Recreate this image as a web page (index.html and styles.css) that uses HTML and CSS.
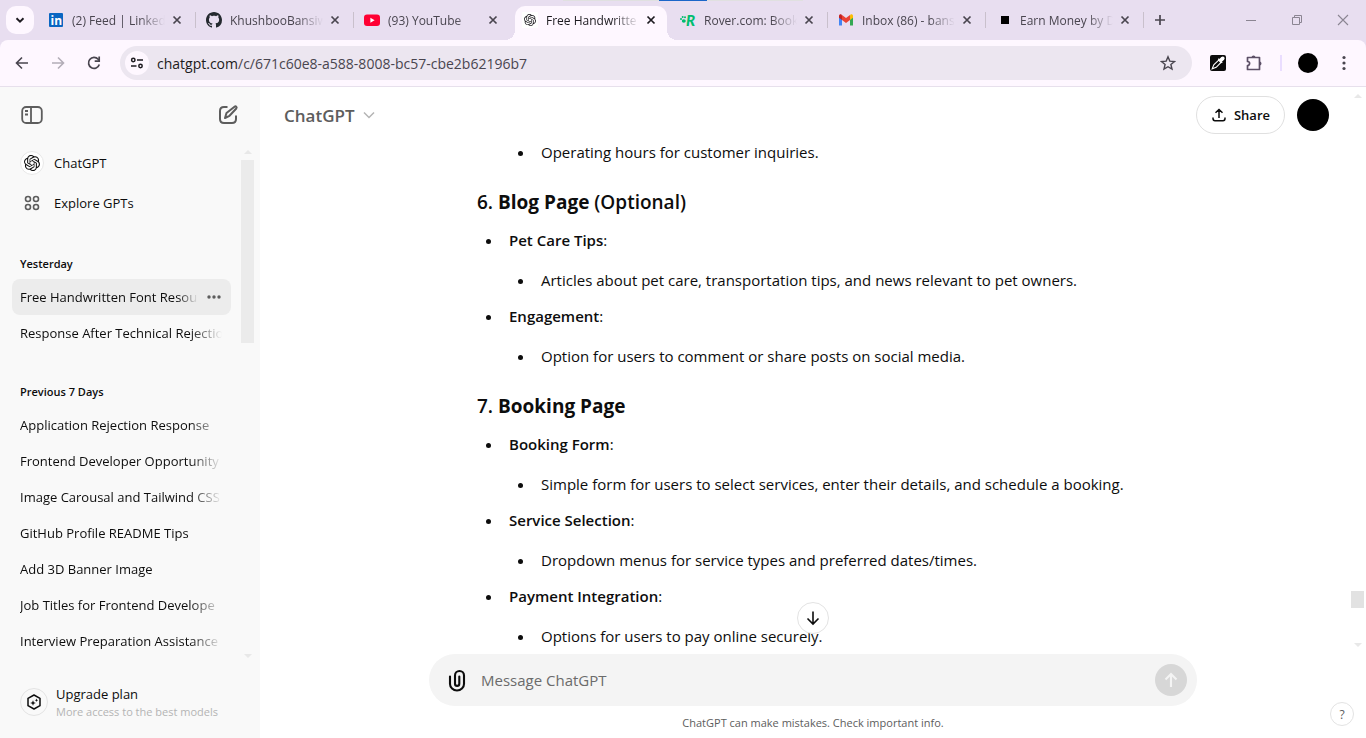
FILE: index.html
```html
<!DOCTYPE html>
<html lang="en">
<head>
<meta charset="utf-8">
<title>Free Handwritten Font Resources</title>
<link rel="stylesheet" href="styles.css">
</head>
<body>
<svg class="defs" aria-hidden="true">
  <symbol id="x" viewBox="0 0 16 16"><path d="M4.5 4.5l7 7M11.500 4.500l-7 7" fill="none" stroke="currentColor" stroke-width="1.7"/></symbol>
  <symbol id="openai" viewBox="0 0 24 24"><path fill="currentColor" d="M22.2819 9.8211a5.9847 5.9847 0 0 0-.5157-4.9108 6.0462 6.0462 0 0 0-6.5098-2.9A6.0651 6.0651 0 0 0 4.9807 4.1818a5.9847 5.9847 0 0 0-3.9977 2.9 6.0462 6.0462 0 0 0 .7427 7.0966 5.98 5.98 0 0 0 .511 4.9107 6.051 6.051 0 0 0 6.5146 2.9001A5.9847 5.9847 0 0 0 13.2599 24a6.0557 6.0557 0 0 0 5.7718-4.2058 5.9894 5.9894 0 0 0 3.9977-2.9001 6.0557 6.0557 0 0 0-.7475-7.0729zm-9.022 12.6081a4.4755 4.4755 0 0 1-2.8764-1.0408l.1419-.0804 4.7783-2.7582a.7948.7948 0 0 0 .3927-.6813v-6.7369l2.02 1.1686a.071.071 0 0 1 .038.052v5.5826a4.504 4.504 0 0 1-4.4945 4.4944zm-9.6607-4.1254a4.4708 4.4708 0 0 1-.5346-3.0137l.142.0852 4.783 2.7582a.7712.7712 0 0 0 .7806 0l5.8428-3.3685v2.3324a.0804.0804 0 0 1-.0332.0615L9.74 19.9502a4.4992 4.4992 0 0 1-6.1408-1.6464zM2.3408 7.8956a4.485 4.485 0 0 1 2.3655-1.9728V11.6a.7664.7664 0 0 0 .3879.6765l5.8144 3.3543-2.0201 1.1685a.0757.0757 0 0 1-.071 0l-4.8303-2.7865A4.504 4.504 0 0 1 2.3408 7.872zm16.5963 3.8558L13.1038 8.364 15.1192 7.2a.0757.0757 0 0 1 .071 0l4.8303 2.7913a4.4944 4.4944 0 0 1-.6765 8.1042v-5.6772a.79.79 0 0 0-.407-.667zm2.0107-3.0231l-.142-.0852-4.7735-2.7818a.7759.7759 0 0 0-.7854 0L9.409 9.2297V6.8974a.0662.0662 0 0 1 .0284-.0615l4.8303-2.7866a4.4992 4.4992 0 0 1 6.6802 4.66zM8.3065 12.863l-2.02-1.1638a.0804.0804 0 0 1-.038-.0567V6.0742a4.4992 4.4992 0 0 1 7.3757-3.4537l-.142.0805L8.704 5.459a.7948.7948 0 0 0-.3927.6813zm1.0976-2.3654l2.602-1.4998 2.6069 1.4998v2.9994l-2.5974 1.4997-2.6067-1.4997Z"/></symbol>
</svg>

<header class="browser">
  <div class="loading"></div>
  <div class="tabstrip">
    <button class="tab-search" aria-label="Search tabs"><svg width="12" height="12" viewBox="0 0 12 12"><path d="M2.500 4.300L6 7.700l3.500-3.400" fill="none" stroke="#1d1b20" stroke-width="1.900"/></svg></button>
    <div class="tabs">
      <div class="tab">
        <svg class="fav" viewBox="0 0 16 16"><rect x="1" y="1" width="14" height="14" rx="1" fill="#0a66c2"/><text x="2.500" y="12.600" font-family="Open Sans, sans-serif" font-size="12" font-weight="700" fill="#fff">in</text></svg>
        <span class="tab-title">(2) Feed | Linked</span>
        <button class="close" aria-label="Close tab"><svg viewBox="0 0 16 16"><use href="#x"/></svg></button>
      </div>
      <div class="tab">
        <svg class="fav" viewBox="0 0 16 16"><path fill="#24292f" d="M8 0C3.580 0 0 3.580 0 8c0 3.540 2.290 6.530 5.470 7.590.4.070.55-.17.55-.38 0-.19-.01-.82-.01-1.490-2.010.37-2.530-.49-2.690-.94-.09-.23-.48-.94-.82-1.130-.28-.15-.68-.52-.01-.53.63-.01 1.080.58 1.230.82.72 1.210 1.870.87 2.330.66.070-.52.28-.87.51-1.070-1.780-.2-3.640-.89-3.640-3.950 0-.87.31-1.590.82-2.150-.08-.2-.36-1.020.08-2.120 0 0 .67-.21 2.200.82.64-.18 1.320-.27 2-.27s1.360.09 2 .27c1.530-1.040 2.200-.82 2.200-.82.44 1.100.16 1.920.08 2.120.51.56.82 1.270.82 2.150 0 3.070-1.870 3.750-3.650 3.950.29.25.54.73.54 1.480 0 1.070-.01 1.930-.01 2.200 0 .21.15.46.55.38A8.010 8.010 0 0 0 16 8c0-4.420-3.580-8-8-8z"/></svg>
        <span class="tab-title">KhushbooBansiw</span>
        <button class="close" aria-label="Close tab"><svg viewBox="0 0 16 16"><use href="#x"/></svg></button>
      </div>
      <div class="tab before-active">
        <svg class="fav" viewBox="0 0 16 16"><rect y="2.500" width="16" height="11.500" rx="3" fill="#ff0033"/><path d="M6.400 5.700v5l4.200-2.500z" fill="#fff"/></svg>
        <span class="tab-title">(93) YouTube</span>
        <button class="close" aria-label="Close tab"><svg viewBox="0 0 16 16"><use href="#x"/></svg></button>
      </div>
      <div class="tab active">
        <span class="fav fav-gpt"><svg viewBox="0 0 24 24"><use href="#openai"/></svg></span>
        <span class="tab-title">Free Handwritte</span>
        <button class="close" aria-label="Close tab"><svg viewBox="0 0 16 16"><use href="#x"/></svg></button>
      </div>
      <div class="tab">
        <svg class="fav" viewBox="0 0 16 16"><g fill="#00bd70"><ellipse cx="3.800" cy="9" rx="2" ry="1.700"/><circle cx="1" cy="6.900" r="1"/><circle cx="2.700" cy="5.100" r="1"/><circle cx="5" cy="5.300" r="1"/></g><text x="6" y="13.500" font-family="Lato, sans-serif" font-style="italic" font-size="15" font-weight="900" fill="#00bd70">R</text></svg>
        <span class="tab-title">Rover.com: Book</span>
        <button class="close" aria-label="Close tab"><svg viewBox="0 0 16 16"><use href="#x"/></svg></button>
      </div>
      <div class="tab">
        <svg class="fav" viewBox="0 0 16 16"><path d="M1 4v9.500h3V7z" fill="#4285f4"/><path d="M12 7v6.500h3V4z" fill="#34a853"/><path d="M12 3.500V8l3-2.200V4c0-1.500-1.600-2.100-2.600-1.300z" fill="#fbbc04"/><path d="M4 3.500V8L1 5.800V4c0-1.500 1.600-2.100 2.600-1.300z" fill="#c5221f"/><path d="M4 3v5l4 3 4-3V3L8 6z" fill="#ea4335"/></svg>
        <span class="tab-title">Inbox (86) - bans</span>
        <button class="close" aria-label="Close tab"><svg viewBox="0 0 16 16"><use href="#x"/></svg></button>
      </div>
      <div class="tab">
        <svg class="fav" viewBox="0 0 16 16"><rect x="5" y="4" width="8" height="8"/></svg>
        <span class="tab-title">Earn Money by D</span>
        <button class="close" aria-label="Close tab"><svg viewBox="0 0 16 16"><use href="#x"/></svg></button>
      </div>
    </div>
    <button class="new-tab" aria-label="New tab"><svg width="12" height="12" viewBox="0 0 12 12"><path d="M6 1v10M1 6h10" stroke="#49454f" stroke-width="1.700"/></svg></button>
    <div class="window-controls">
      <button aria-label="Minimize"><svg width="12" height="12" viewBox="0 0 12 12"><path d="M1 6.500h10" stroke="#8b8592"/></svg></button>
      <button aria-label="Restore"><svg width="12" height="12" viewBox="0 0 12 12" fill="none" stroke="#8b8592"><path d="M1.500 3.500h7v7h-7zM3.500 3.500v-2h7v7h-2"/></svg></button>
      <button aria-label="Close"><svg width="12" height="12" viewBox="0 0 12 12"><path d="M1 1l10 10M11 1L1 11" stroke="#8b8592" stroke-width="1.100"/></svg></button>
    </div>
  </div>
  <div class="toolbar">
    <div class="nav-buttons">
      <button aria-label="Back"><svg width="16" height="16" viewBox="0 0 16 16"><path d="M14 8H3M8 2.500L2.500 8 8 13.500" fill="none" stroke="#49454f" stroke-width="1.600"/></svg></button>
      <button aria-label="Forward"><svg width="16" height="16" viewBox="0 0 16 16"><path d="M2 8h11M8 2.500L13.500 8 8 13.500" fill="none" stroke="#b3adb8" stroke-width="1.600"/></svg></button>
      <button aria-label="Reload"><svg width="16" height="16" viewBox="0 0 16 16"><path d="M13.300 9.500A5.500 5.500 0 1 1 12.200 4.300L13 5.200" fill="none" stroke="#49454f" stroke-width="1.700"/><path d="M13.200 1.500v4.700H8.700" fill="none" stroke="#49454f" stroke-width="1.700"/></svg></button>
    </div>
    <div class="omnibox">
      <button class="site-info" aria-label="Site information"><svg width="14" height="14" viewBox="0 0 14 14" fill="none" stroke="#1d1b20" stroke-width="1.500"><circle cx="3.300" cy="4" r="1.700"/><path d="M7 4h6M1 10h5.500"/><circle cx="10.500" cy="10" r="1.700"/></svg></button>
      <div class="url"><span class="host">chatgpt.com</span>/c/671c60e8-a588-8008-bc57-cbe2b62196b7</div>
      <button class="star" aria-label="Bookmark"><svg width="16" height="16" viewBox="0 0 16 16"><path d="M8 1.800l1.800 4.300 4.700.4-3.600 3 1.100 4.600L8 11.700 4 14.100l1.100-4.600-3.600-3 4.700-.4z" fill="none" stroke="#49454f" stroke-width="1.400"/></svg></button>
    </div>
    <div class="extensions">
      <button aria-label="Color picker"><svg width="16" height="16" viewBox="0 0 16 16"><rect width="16" height="16" rx="2" fill="#0c0c0c"/><path d="M8.700 5.200L3.800 9.800l-1.600 4 4-1.500 4.800-4.800z" fill="none" stroke="#fff" stroke-width="1.100"/><path d="M8.300 3.800l3.900 3.900M9.800 4.800l2-2.200c1.500-1 2.700.4 1.700 1.700l-2.100 2z" fill="#fff" stroke="#fff" stroke-width="1.500"/></svg></button>
      <button aria-label="Extensions"><svg width="18" height="18" viewBox="0 0 18 18"><path d="M2.500 3.500h12v12h-12v-4c2.800 0 2.800-4 0-4z" fill="none" stroke="#5d5067" stroke-width="1.700" stroke-linejoin="round"/><path d="M6.500 3.500a2 2 0 0 1 4 0M14.500 7.500a2 2 0 0 1 0 4" fill="#5d5067"/></svg></button>
      <span class="divider"></span>
      <button aria-label="Profile"><span class="profile"></span></button>
      <button aria-label="Menu"><svg width="16" height="16" viewBox="0 0 16 16" fill="#49454f"><circle cx="8" cy="2.500" r="1.600"/><circle cx="8" cy="8" r="1.600"/><circle cx="8" cy="13.500" r="1.600"/></svg></button>
    </div>
  </div>
</header>

<div class="app">
  <aside class="sidebar">
    <div class="side-top">
      <button aria-label="Close sidebar"><svg width="24" height="24" viewBox="0 0 24 24" fill="none" stroke="#5d5d5d" stroke-width="1.800"><rect x="2.200" y="4" width="19.600" height="16" rx="4"/><path d="M11 4v16M5 8h3M5 11.500h3"/></svg></button>
      <button aria-label="New chat"><svg width="24" height="24" viewBox="0 0 24 24" fill="none" stroke="#5d5d5d" stroke-width="2"><path d="M11.500 4H8C5 4 4 5 4 8v8c0 3 1 4 4 4h8c3 0 4-1 4-4v-3.500"/><path d="M18.500 3.700c1.300-1 2.800.5 1.800 1.800L13.500 12.800 9 15l1.500-5z" stroke-linejoin="round"/></svg></button>
    </div>
    <div class="side-scroll">
      <nav class="side-list">
        <a class="link" href="#"><span class="round"><svg width="16" height="16" viewBox="0 0 24 24"><use href="#openai"/></svg></span>ChatGPT</a>
        <a class="link" href="#"><span class="round plain"><svg width="16" height="16" viewBox="0 0 16 16" fill="none" stroke="#5d5d5d" stroke-width="1.600"><circle cx="4" cy="4" r="2.500"/><circle cx="12" cy="4" r="2.500"/><circle cx="4" cy="12" r="2.500"/><circle cx="12" cy="12" r="2.500"/></svg></span>Explore GPTs</a>
        <h2>Yesterday</h2>
        <div class="chat selected"><a href="#">Free Handwritten Font Resou</a><button aria-label="Options"><svg width="16" height="16" viewBox="0 0 16 16" fill="#5d5d5d"><circle cx="3" cy="8" r="1.700"/><circle cx="8" cy="8" r="1.700"/><circle cx="13" cy="8" r="1.700"/></svg></button></div>
        <div class="chat"><a href="#">Response After Technical Rejectio</a></div>
        <h2>Previous 7 Days</h2>
        <div class="chat"><a href="#">Application Rejection Response</a></div>
        <div class="chat"><a href="#">Frontend Developer Opportunity</a></div>
        <div class="chat"><a href="#">Image Carousal and Tailwind CSS</a></div>
        <div class="chat"><a href="#">GitHub Profile README Tips</a></div>
        <div class="chat"><a href="#">Add 3D Banner Image</a></div>
        <div class="chat"><a href="#">Job Titles for Frontend Develope</a></div>
        <div class="chat"><a href="#">Interview Preparation Assistance</a></div>
      </nav>
      <div class="scrollbar"><i class="up"></i><i class="thumb"></i><i class="down"></i></div>
    </div>
    <a class="upgrade" href="#">
      <span class="badge"><svg width="18" height="18" viewBox="0 0 18 18"><path d="M9 2l6 3.300v7.400L9 16l-6-3.300V5.300z" fill="none" stroke="#0d0d0d" stroke-width="1.500" stroke-linejoin="round"/><path d="M8 7.200l.8 2 2 .8-2 .8-.8 2-.8-2-2-.8 2-.8zM11.500 5.500l.5 1.200 1.200.5-1.200.5-.5 1.200-.5-1.200-1.200-.5 1.200-.5z" fill="#0d0d0d"/></svg></span>
      <span class="upgrade-text"><span>Upgrade plan</span><small>More access to the best models</small></span>
    </a>
  </aside>

  <main class="main">
    <div class="main-top">
      <button class="model">ChatGPT <svg width="12" height="12" viewBox="0 0 12 12"><path d="M1 3.500l5 5 5-5" fill="none" stroke="#b4b4b4" stroke-width="1.500"/></svg></button>
      <div class="top-actions">
        <button class="share"><svg width="14" height="14" viewBox="0 0 14 14" fill="none" stroke="#0d0d0d" stroke-width="1.500"><path d="M7 10V1.500M3.500 4.800L7 1.500l3.500 3.300M1 9.500v1c0 1.500.5 2.200 2 2.200h8c1.500 0 2-.7 2-2.200v-1"/></svg>Share</button>
        <button class="avatar" aria-label="Account"></button>
      </div>
    </div>
    <div class="thread">
      <article class="column">
        <ul><li><ul><li>Operating hours for customer inquiries.</li></ul></li></ul>
        <h3>6. <b>Blog Page</b> (Optional)</h3>
        <ul>
          <li><strong>Pet Care Tips</strong>:<ul><li>Articles about pet care, transportation tips, and news relevant to pet owners.</li></ul></li>
          <li><strong>Engagement</strong>:<ul><li>Option for users to comment or share posts on social media.</li></ul></li>
        </ul>
        <h3>7. <b>Booking Page</b></h3>
        <ul>
          <li><strong>Booking Form</strong>:<ul><li>Simple form for users to select services, enter their details, and schedule a booking.</li></ul></li>
          <li><strong>Service Selection</strong>:<ul><li>Dropdown menus for service types and preferred dates/times.</li></ul></li>
          <li><strong>Payment Integration</strong>:<ul><li>Options for users to pay online securely.</li></ul></li>
        </ul>
      </article>
      <button class="to-bottom" aria-label="Scroll to bottom"><svg width="16" height="16" viewBox="0 0 16 16"><path d="M8 1.500v12.500M2.500 8.500L8 14l5.500-5.500" fill="none" stroke="#0d0d0d" stroke-width="1.600"/></svg></button>
    </div>
    <div class="bottom">
      <form class="composer">
        <button type="button" class="attach" aria-label="Attach files"><svg width="24" height="24" viewBox="0 0 24 24"><path d="M5 8.500v7.500a7 6.500 0 0 0 14 0V7.500a4.500 4.500 0 0 0-9 0v8.200a2 2 0 0 0 4.300 0V8.500" fill="none" stroke="#0d0d0d" stroke-width="2.100" stroke-linecap="round"/></svg></button>
        <input type="text" placeholder="Message ChatGPT" aria-label="Message ChatGPT">
        <button type="button" class="send" aria-label="Send"><svg width="16" height="16" viewBox="0 0 16 16"><path d="M8 15V2M2.500 7.500L8 2l5.500 5.500" fill="none" stroke="#f4f4f4" stroke-width="2.100"/></svg></button>
      </form>
      <p>ChatGPT can make mistakes. Check important info.</p>
    </div>
    <div class="scrollbar main-scroll"><i class="up"></i><i class="thumb"></i><i class="down"></i></div>
    <button class="help" aria-label="Help">?</button>
  </main>
</div>
</body>
</html>
```
FILE: styles.css
```css
* { box-sizing: border-box; }
body {
  margin: 0;
  height: 100vh;
  display: flex;
  flex-direction: column;
  overflow: hidden;
  font-family: "Open Sans", "Noto Sans", sans-serif;
  font-size: 15px;
  color: #0d0d0d;
  background: #fff;
}
button {
  display: grid;
  place-items: center;
  padding: 0;
  border: 0;
  background: none;
  font: inherit;
  color: inherit;
}
a { color: inherit; text-decoration: none; }
.defs { position: absolute; width: 0; height: 0; }

/* Browser frame */
.browser { position: relative; background: #e8def0; font-size: 12px; border-bottom: 1px solid #e7e0ec; }
.loading {
  position: absolute;
  top: 0;
  left: 50%;
  width: 240px;
  height: 1px;
  margin-left: -120px;
  background: linear-gradient(90deg, #e0e0e0 40%, #1b66c9 40%, #1b66c9 60%, #e0e0e0 60%);
}
.tabstrip { display: flex; height: 40px; padding-left: 6px; }
.tab-search { flex: none; width: 28px; height: 28px; margin-top: 6px; border-radius: 10px; background: #fef7ff; }
.tabs { display: flex; flex: 0 1 1106px; min-width: 0; margin-left: 4px; }
.tab {
  position: relative;
  display: flex;
  flex: 1 1 0;
  align-items: center;
  min-width: 0;
  padding: 0 11px 0 10px;
  color: #49454f;
}
.tab::after { content: ""; position: absolute; right: 0; top: 12px; width: 1px; height: 16px; background: #c9c0cc; }
.tab.before-active::after { display: none; }
.fav { flex: none; width: 16px; height: 16px; }
.fav-gpt { display: grid; place-items: center; background: #fff; }
.fav-gpt svg { width: 12px; height: 12px; }
.tab-title {
  flex: 1;
  min-width: 0;
  margin: 0 4px 0 8px;
  overflow: hidden;
  white-space: nowrap;
  mask-image: linear-gradient(90deg, #000 calc(100% - 26px), transparent);
}
.close { flex: none; width: 16px; height: 16px; }
.close svg { width: 16px; height: 16px; }
.tab.active { z-index: 0; color: #1d1b20; }
.tab.active::before {
  content: "";
  position: absolute;
  inset: 6px 3px 0;
  z-index: -1;
  border-radius: 10px 10px 0 0;
  background: #fef7ff;
}
.tab.active::after {
  inset: auto -7px 0;
  z-index: -1;
  width: auto;
  height: 10px;
  background:
    radial-gradient(circle at 0 0, transparent 10px, #fef7ff 10px) left / 10px 10px no-repeat,
    radial-gradient(circle at 100% 0, transparent 10px, #fef7ff 10px) right / 10px 10px no-repeat;
}
.new-tab { width: 28px; height: 28px; margin: 6px 0 0 2px; }
.window-controls { display: flex; margin-left: auto; }
.window-controls button { width: 46px; height: 40px; }
.toolbar {
  display: flex;
  align-items: center;
  gap: 12px;
  height: 46px;
  padding: 0 8px;
  border-radius: 8px 8px 0 0;
  background: #fef7ff;
}
.nav-buttons, .extensions { display: flex; align-items: center; gap: 8px; }
.nav-buttons button, .extensions button { width: 28px; height: 28px; }
.omnibox {
  display: flex;
  flex: 1;
  align-items: center;
  height: 34px;
  padding: 0 12px 0 5px;
  border-radius: 17px;
  background: #ece6f0;
  font-size: 14px;
  color: #49454f;
}
.site-info { width: 24px; height: 24px; border-radius: 50%; background: #fef7ff; }
.url { flex: 1; margin-left: 8px; white-space: nowrap; }
.host { color: #1d1b20; }
.star { width: 24px; height: 24px; }
.divider { width: 2px; height: 16px; margin: 0 4px; background: #eaddff; }
.profile { width: 20px; height: 20px; border-radius: 50%; background: #000; }

/* Application */
.app { display: flex; flex: 1; min-height: 0; }
.sidebar { display: flex; flex-direction: column; flex: none; width: 260px; background: #f9f9f9; font-size: 13px; }
.side-top { display: flex; justify-content: space-between; padding: 8px 12px; }
.side-top button { width: 40px; height: 40px; }
.side-scroll { display: flex; flex: 1; min-height: 0; }
.side-list { flex: 1; min-width: 0; padding-left: 12px; overflow: hidden; }
.link { display: flex; align-items: center; gap: 10px; height: 40px; padding-left: 8px; }
.round {
  display: grid;
  place-items: center;
  width: 24px;
  height: 24px;
  border: 1px solid #e8e8e8;
  border-radius: 50%;
  background: #fff;
}
.round.plain { border: 0; background: none; }
.side-list h2 { margin: 32px 0 7px; padding-left: 8px; font-size: 11px; line-height: 17px; font-weight: 600; }
.chat { display: flex; align-items: center; height: 36px; padding: 0 9px 0 8px; border-radius: 8px; }
.chat a {
  flex: 1;
  min-width: 0;
  overflow: hidden;
  line-height: 20px;
  white-space: nowrap;
  mask-image: linear-gradient(90deg, #000 calc(100% - 32px), transparent);
}
.chat.selected { background: #ececec; }
.chat.selected a { mask-image: linear-gradient(90deg, #000 calc(100% - 20px), transparent); }
.chat.selected button { width: 16px; height: 16px; margin-left: 8px; }
.scrollbar { display: flex; flex-direction: column; align-items: center; width: 13px; margin: 7px 6px 4px 10px; }
.up, .down { border: 4px solid transparent; }
.up { border-top: 0; border-bottom-color: #e8e8e8; }
.down { margin-top: auto; border-bottom: 0; border-top-color: #e8e8e8; }
.thumb { width: 13px; height: 183px; margin-top: 6px; background: #ebebeb; }
.upgrade { display: flex; align-items: center; gap: 8px; padding: 22px 20px 18px; }
.badge { display: grid; place-items: center; width: 28px; height: 28px; border: 1px solid #e3e3e3; border-radius: 50%; }
.upgrade-text { display: flex; flex-direction: column; line-height: 20px; }
.upgrade-text small { font-size: 11px; line-height: 16px; color: #b4b4b4; }

.main { position: relative; display: flex; flex: 1; flex-direction: column; min-width: 0; }
.main-top { display: flex; justify-content: space-between; padding: 9px 37px 4px 24px; }
.model { display: flex; align-items: center; gap: 8px; font-size: 17px; font-weight: 600; color: #5d5d5d; }
.top-actions { display: flex; align-items: center; gap: 12px; }
.share {
  display: flex;
  align-items: center;
  gap: 8px;
  height: 38px;
  padding: 0 14px 0 15px;
  border: 1px solid #e0e0e0;
  border-radius: 19px;
  font-size: 13px;
  font-weight: 600;
}
.avatar { width: 32px; height: 32px; border-radius: 50%; background: #000; }
.thread { position: relative; flex: 1; min-height: 0; overflow: hidden; }
.column { max-width: 672px; margin: 0 auto; line-height: 28px; }
.column ul { margin: 0; padding-left: 26px; list-style: disc; }
.column li { padding-left: 6px; }
.column li + li { margin-top: 8px; }
.column li ul { margin-top: 12px; }
.column > ul:first-child, .column > ul:first-child > li { list-style: none; }
.column > ul:first-child ul { margin-top: 0; }
.column strong { font-weight: 600; }
.column h3 { margin: 20px 0 8px; font-size: 19px; line-height: 32px; font-weight: 600; }
.column h3 b { font-weight: 700; }
.to-bottom {
  position: absolute;
  bottom: 20px;
  left: 50%;
  width: 32px;
  height: 32px;
  margin-left: -16px;
  border: 1px solid #e3e3e3;
  border-radius: 50%;
  background: #fff;
}
.bottom { padding: 0 16px; }
.composer {
  display: flex;
  align-items: center;
  gap: 12px;
  max-width: 768px;
  height: 52px;
  margin: 0 auto;
  padding: 0 10px 0 16px;
  border-radius: 26px;
  background: #f4f4f4;
}
.attach { width: 24px; height: 24px; }
.composer input { flex: 1; min-width: 0; padding: 0; border: 0; outline: 0; background: none; font: inherit; }
.composer input::placeholder { color: #6b6b6b; opacity: 1; }
.send { width: 32px; height: 32px; border-radius: 50%; background: #d7d7d7; }
.bottom p { margin: 9px 0 7px; font-size: 11px; line-height: 16px; text-align: center; color: #5d5d5d; }
.main-scroll { position: absolute; top: 0; right: 2px; bottom: 91px; margin: 7px 0 0; }
.main-scroll .thumb { height: 17px; margin: auto 0 35px; background: #e2e2e2; }
.main-scroll .down { margin-top: 0; }
.help {
  position: absolute;
  right: 12px;
  bottom: 12px;
  width: 24px;
  height: 24px;
  border: 1px solid #e3e3e3;
  border-radius: 50%;
  background: #fff;
  font-size: 12px;
  color: #5d5d5d;
}
```
